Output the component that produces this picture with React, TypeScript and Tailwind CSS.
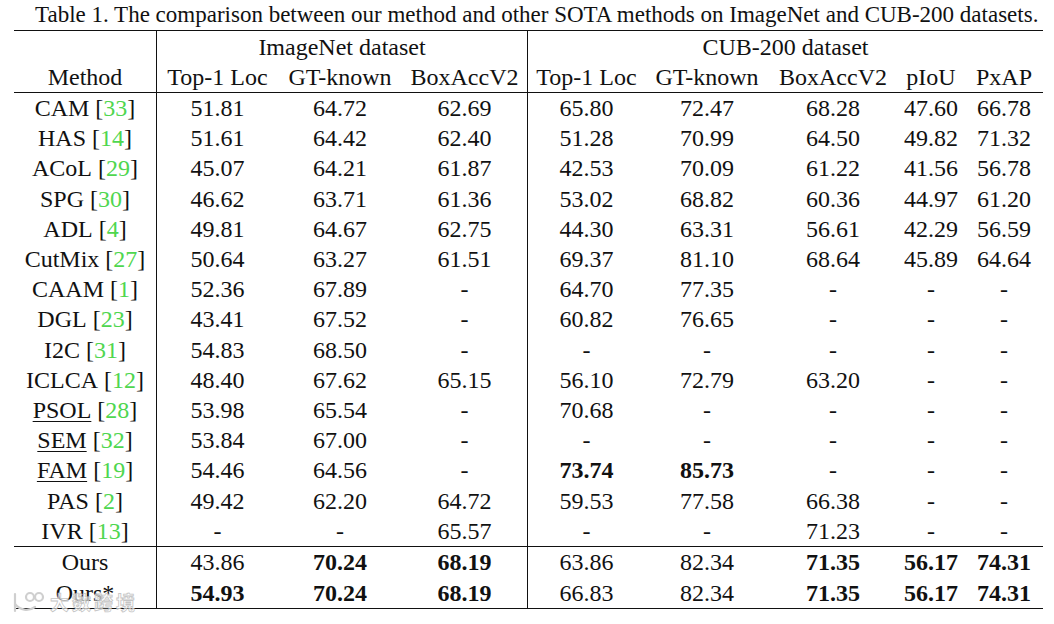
import React from "react";

type Cell = string | { v: string; b?: boolean };

const cols = "grid grid-cols-[142px_122px_124px_125px_118px_124px_128px_68px_78px]";

const rows: { name: string; ref: string; u?: boolean; vals: Cell[] }[] = [
  { name: "CAM", ref: "33", vals: ["51.81", "64.72", "62.69", "65.80", "72.47", "68.28", "47.60", "66.78"] },
  { name: "HAS", ref: "14", vals: ["51.61", "64.42", "62.40", "51.28", "70.99", "64.50", "49.82", "71.32"] },
  { name: "ACoL", ref: "29", vals: ["45.07", "64.21", "61.87", "42.53", "70.09", "61.22", "41.56", "56.78"] },
  { name: "SPG", ref: "30", vals: ["46.62", "63.71", "61.36", "53.02", "68.82", "60.36", "44.97", "61.20"] },
  { name: "ADL", ref: "4", vals: ["49.81", "64.67", "62.75", "44.30", "63.31", "56.61", "42.29", "56.59"] },
  { name: "CutMix", ref: "27", vals: ["50.64", "63.27", "61.51", "69.37", "81.10", "68.64", "45.89", "64.64"] },
  { name: "CAAM", ref: "1", vals: ["52.36", "67.89", "-", "64.70", "77.35", "-", "-", "-"] },
  { name: "DGL", ref: "23", vals: ["43.41", "67.52", "-", "60.82", "76.65", "-", "-", "-"] },
  { name: "I2C", ref: "31", vals: ["54.83", "68.50", "-", "-", "-", "-", "-", "-"] },
  { name: "ICLCA", ref: "12", vals: ["48.40", "67.62", "65.15", "56.10", "72.79", "63.20", "-", "-"] },
  { name: "PSOL", ref: "28", u: true, vals: ["53.98", "65.54", "-", "70.68", "-", "-", "-", "-"] },
  { name: "SEM", ref: "32", u: true, vals: ["53.84", "67.00", "-", "-", "-", "-", "-", "-"] },
  { name: "FAM", ref: "19", u: true, vals: ["54.46", "64.56", "-", { v: "73.74", b: true }, { v: "85.73", b: true }, "-", "-", "-"] },
  { name: "PAS", ref: "2", vals: ["49.42", "62.20", "64.72", "59.53", "77.58", "66.38", "-", "-"] },
  { name: "IVR", ref: "13", vals: ["-", "-", "65.57", "-", "-", "71.23", "-", "-"] },
];

const ours: { name: string; vals: Cell[] }[] = [
  {
    name: "Ours",
    vals: ["43.86", { v: "70.24", b: true }, { v: "68.19", b: true }, "63.86", "82.34", { v: "71.35", b: true }, { v: "56.17", b: true }, { v: "74.31", b: true }],
  },
  {
    name: "Ours*",
    vals: [{ v: "54.93", b: true }, { v: "70.24", b: true }, { v: "68.19", b: true }, "66.83", "82.34", { v: "71.35", b: true }, { v: "56.17", b: true }, { v: "74.31", b: true }],
  },
];

function ValCells({ vals }: { vals: Cell[] }) {
  return (
    <>
      {vals.map((c, i) => {
        const v = typeof c === "string" ? c : c.v;
        const b = typeof c !== "string" && c.b;
        const border = i === 0 || i === 3 ? "border-l border-[#111]" : "";
        return (
          <div key={i} className={`flex items-center justify-center ${border} ${b ? "font-bold" : ""}`}>
            {v}
          </div>
        );
      })}
    </>
  );
}

export default function App() {
  return (
    <div
      className="relative w-[1054px] h-[624px] bg-white text-[#111] overflow-hidden"
      style={{ fontFamily: '"Liberation Serif", "Times New Roman", serif' }}
    >
      <div className="h-[30px] pl-[35px] pt-[2px] text-[23px] leading-[26px] whitespace-nowrap">
        Table 1. The comparison between our method and other SOTA methods on ImageNet and CUB-200 datasets.
      </div>
      <div className="ml-[14px] w-[1029px] text-[24px] leading-none">
        <div className="border-t border-[#111]">
          <div className={`${cols} h-[31px]`}>
            <div></div>
            <div className="col-span-3 flex items-center justify-center border-l border-[#111]">ImageNet dataset</div>
            <div className="col-span-5 flex items-center justify-center border-l border-[#111]">CUB-200 dataset</div>
          </div>
          <div className={`${cols} h-[30px]`}>
            <div className="flex items-center justify-center">Method</div>
            <div className="flex items-center justify-center border-l border-[#111] whitespace-nowrap">Top-1 Loc</div>
            <div className="flex items-center justify-center whitespace-nowrap">GT-known</div>
            <div className="flex items-center justify-center whitespace-nowrap">BoxAccV2</div>
            <div className="flex items-center justify-center border-l border-[#111] whitespace-nowrap">Top-1 Loc</div>
            <div className="flex items-center justify-center whitespace-nowrap">GT-known</div>
            <div className="flex items-center justify-center whitespace-nowrap">BoxAccV2</div>
            <div className="flex items-center justify-center">pIoU</div>
            <div className="flex items-center justify-center">PxAP</div>
          </div>
        </div>
        <div className="border-t border-[#111]">
          {rows.map((r) => (
            <div key={r.name} className={`${cols} h-[30.2px]`}>
              <div className="flex items-center justify-center whitespace-nowrap">
                <span className={r.u ? "underline decoration-1 underline-offset-[3px]" : ""}>{r.name}</span>
                <span>&nbsp;[</span>
                <span className="text-[#4fd64f]">{r.ref}</span>
                <span>]</span>
              </div>
              <ValCells vals={r.vals} />
            </div>
          ))}
        </div>
        <div className="border-t border-b border-[#111]">
          {ours.map((r) => (
            <div key={r.name} className={`${cols} h-[30.5px]`}>
              <div className="flex items-center justify-center">{r.name}</div>
              <ValCells vals={r.vals} />
            </div>
          ))}
        </div>
      </div>
      <div className="absolute left-[10px] top-[588px] flex items-center gap-[4px]">
        <svg width="36" height="26" viewBox="0 0 36 26" fill="none" stroke="#cfcfcf" strokeWidth="2.2" strokeLinecap="round">
          <path d="M5 5 L5 22" />
          <path d="M5 15 C10 21, 18 23, 25 18" />
          <circle cx="20" cy="8" r="4" />
          <circle cx="29" cy="8" r="4" />
        </svg>
        <span
          className="text-[19px] font-bold tracking-[3px] text-white/60"
          style={{ fontFamily: '"Noto Sans CJK SC", sans-serif', WebkitTextStroke: "0.8px #c4c4c4" }}
        >
          大数跨境
        </span>
      </div>
    </div>
  );
}
